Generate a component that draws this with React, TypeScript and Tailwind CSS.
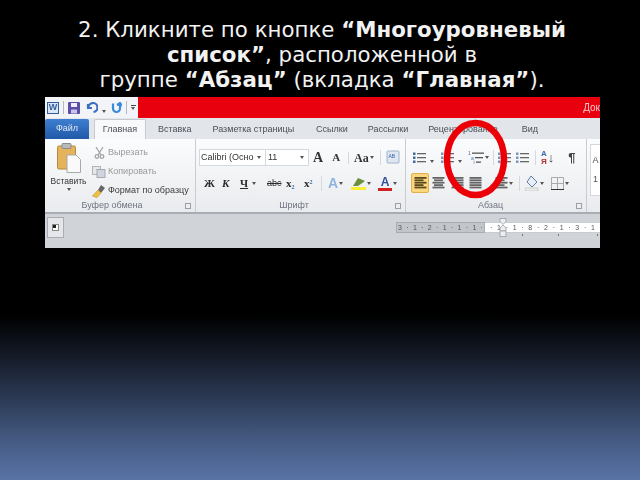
function Caret() {
  return <span className="mx-px inline-block h-0 w-0 border-x-[2px] border-t-[3px] border-x-transparent border-t-[#555]" />;
}

function Lines({ kind, color = "#666" }: { kind: "left" | "center" | "right" | "full"; color?: string }) {
  const rows = [0, 1, 2, 3, 4];
  return (
    <svg width="13" height="12" viewBox="0 0 13 12">
      {rows.map((r) => {
        const short = r % 2 === 1;
        const w = kind === "full" || !short ? 12 : 9;
        const x = kind === "left" || kind === "full" ? 0.5 : kind === "center" ? (13 - w) / 2 : 12.5 - w;
        return <rect key={r} x={x} y={r * 2.4} width={w} height="1.8" fill={color} />;
      })}
    </svg>
  );
}

function ListIcon({ kind }: { kind: "bullet" | "number" | "multi" }) {
  if (kind === "multi") {
    return (
      <svg width="16" height="14" viewBox="0 0 16 14" fontFamily="Liberation Sans, sans-serif" fontSize="5" fill="#3b6fb0">
        <text x="0" y="4">1</text>
        <rect x="4" y="1.500" width="12" height="1.300" fill="#555" />
        <text x="3" y="8.500">a</text>
        <rect x="7" y="6" width="8" height="1.300" fill="#555" />
        <text x="5.500" y="13">i</text>
        <rect x="8" y="10.500" width="5" height="1.300" fill="#555" />
      </svg>
    );
  }
  return (
    <svg width="13" height="12" viewBox="0 0 13 12">
      {[1, 5, 9].map((y) => (
        <g key={y}>
          <rect x="0" y={y - 0.5} width="2.5" height="2.5" fill={kind === "bullet" ? "#41699c" : "#7d95b8"} />
          <rect x="4" y={y} width="9" height="1.3" fill="#666" />
        </g>
      ))}
    </svg>
  );
}

function PasteIcon() {
  return (
    <svg width="24" height="30" viewBox="0 0 24 30">
      <rect x="0.5" y="3" width="18" height="23" rx="1.5" fill="#e3b45a" stroke="#b48a3c" />
      <rect x="5" y="0.5" width="9" height="5" rx="1" fill="#b9b9b9" stroke="#8a8a8a" />
      <path d="M10 12h9l4.500 4.500V29.500H10z" fill="#fafafa" stroke="#a9a9a9" />
    </svg>
  );
}

function SmallAction({ label, color, icon }: { label: string; color: string; icon: React.ReactNode }) {
  return (
    <div className={`flex h-[19px] items-center gap-[2px] text-[9px] ${color}`}>
      <span className="flex w-[14px] justify-center">{icon}</span>
      <span className="whitespace-nowrap">{label}</span>
    </div>
  );
}

function GroupFooter({ label }: { label: string }) {
  return (
    <div className="relative mt-auto flex h-[15px] items-center justify-center pr-[16px] pt-[3px] text-[9px] text-[#6f7480]">
      {label}
      <span className="absolute right-[4px] top-[6px] h-[6px] w-[6px] border border-[#9aa0a8] bg-[#eee]" />
    </div>
  );
}

function ClipboardGroup() {
  return (
    <div className="flex w-[151px] flex-col border-r border-[#c9ccd1] pt-[4px]">
      <div className="flex h-[54px]">
        <div className="flex w-[47px] flex-col items-center text-[8.500px] leading-[10px] text-[#333]">
          <PasteIcon />
          <span className="mt-[3px]">Вставить</span>
          <span className="mt-0 flex h-[6px] items-center"><Caret /></span>
        </div>
        <div>
          <SmallAction
            label="Вырезать"
            color="text-[#9a9a9a]"
            icon={
              <svg width="11" height="13" viewBox="0 0 11 13" fill="none" stroke="#a5a5a5" strokeWidth="1.300">
                <path d="M2 1l5 8M9 1L4 9" />
                <circle cx="3" cy="10.500" r="1.800" />
                <circle cx="8" cy="10.500" r="1.800" />
              </svg>
            }
          />
          <SmallAction
            label="Копировать"
            color="text-[#9a9a9a]"
            icon={
              <svg width="14" height="12" viewBox="0 0 14 12">
                <rect x="0.500" y="0.500" width="8" height="8" fill="#e5e7ea" stroke="#b3b3b3" />
                <rect x="5" y="3.500" width="8" height="8" fill="#cfd6df" stroke="#a4a9b0" />
              </svg>
            }
          />
          <SmallAction
            label="Формат по образцу"
            color="text-[#3c3c3c]"
            icon={
              <svg width="14" height="14" viewBox="0 0 14 14">
                <path d="M9 1l4 3-4 5-3-3z" fill="#666" />
                <path d="M6 6l3 3-4 4.500L0.500 12z" fill="#f0c040" stroke="#b8902c" strokeWidth="0.600" />
              </svg>
            }
          />
        </div>
      </div>
      <GroupFooter label="Буфер обмена" />
    </div>
  );
}

function FontGroup() {
  return (
    <div className="flex w-[210px] flex-col border-r border-[#c9ccd1] pl-[3px] pt-[10px]">
      <div className="flex h-[17px] items-center text-[#333]">
        <div className="flex h-[17px] w-[67px] items-center justify-between border border-[#d5d8dc] bg-white pl-[1px] pr-[3px] text-[9px]">
          <span className="whitespace-nowrap">Calibri (Осно</span>
          <Caret />
        </div>
        <div className="flex h-[17px] w-[43px] items-center justify-between border border-l-0 border-[#d5d8dc] bg-white pl-[2px] pr-[3px] text-[9px]">
          11
          <Caret />
        </div>
        <span className="ml-[4px] font-['Liberation_Serif',serif] text-[14px] font-bold leading-none">A</span>
        <span className="ml-[9px] font-['Liberation_Serif',serif] text-[11px] font-bold leading-none">A</span>
        <span className="ml-[8px] flex items-center whitespace-nowrap border-l border-[#d5d8dc] pl-[5px] font-['Liberation_Serif',serif] text-[12px] font-bold leading-none">
          Aa<Caret />
        </span>
        <span className="ml-[5px] h-[15px] border-l border-[#d5d8dc]" />
        <svg className="ml-[5px]" width="14" height="15" viewBox="0 0 14 15">
          <rect x="1" y="1" width="12" height="12" rx="1" fill="#dfe7f2" stroke="#9db2ce" />
          <text x="2.500" y="8" fontSize="5" fill="#2f5f9e" fontFamily="Liberation Sans, sans-serif">AB</text>
        </svg>
      </div>
      <div className="mt-[9px] flex h-[17px] items-center font-['Liberation_Serif',serif] text-[11px] font-bold text-[#2b2b2b]">
        <span className="ml-[5px] w-[16px]">Ж</span>
        <span className="ml-[2px] w-[18px] italic">К</span>
        <span className="w-[11px] underline">Ч</span>
        <Caret />
        <span className="ml-[10px] w-[19px] font-['Liberation_Sans',sans-serif] text-[9px] font-normal line-through">abc</span>
        <span className="w-[18px]">x<sub className="text-[6px] text-[#3b6fb0]">2</sub></span>
        <span className="w-[17px]">x<sup className="text-[6px] text-[#3b6fb0]">2</sup></span>
        <span className="h-[15px] border-l border-[#d5d8dc]" />
        <span className="ml-[6px] font-['Liberation_Sans',sans-serif] text-[14px] text-[#8fb4e0]">A</span>
        <Caret />
        <span className="ml-[7px] flex w-[15px] flex-col items-center">
          <svg width="14" height="10" viewBox="0 0 14 10"><path d="M1 9l5-8 7 3-7 5z" fill="#6d8f3c" /></svg>
          <span className="h-[3px] w-[15px] bg-[#f7f030]" />
        </span>
        <Caret />
        <span className="ml-[6px] flex w-[14px] flex-col items-center font-['Liberation_Sans',sans-serif] text-[12px] leading-[11px] text-[#2f4f9e]">
          A
          <span className="h-[3px] w-[14px] bg-[#d02020]" />
        </span>
        <Caret />
      </div>
      <GroupFooter label="Шрифт" />
    </div>
  );
}

function ParagraphGroup() {
  return (
    <div className="flex w-[181px] flex-col border-r border-[#c9ccd1] pl-[5px] pt-[10px]">
      <div className="ml-[2px] flex h-[17px] items-center">
        <ListIcon kind="bullet" />
        <span className="ml-[3px]"><Caret /></span>
        <span className="ml-[6px]"><ListIcon kind="number" /></span>
        <span className="ml-[3px]"><Caret /></span>
        <span className="ml-[5px]"><ListIcon kind="multi" /></span>
        <Caret />
        <span className="ml-[3px] h-[15px] border-l border-[#d5d8dc]" />
        <span className="ml-[4px]"><ListIcon kind="number" /></span>
        <span className="ml-[5px]"><ListIcon kind="number" /></span>
        <span className="ml-[6px] h-[15px] border-l border-[#d5d8dc]" />
        <span className="ml-[5px] flex items-center text-[8px] font-bold leading-[8px] text-[#3b6fb0]">
          <span className="flex flex-col"><span>А</span><span className="text-[#b03030]">Я</span></span>
          <span className="ml-[1px] text-[13px] leading-none text-[#444]">↓</span>
        </span>
        <span className="ml-[14px] text-[13px] font-bold leading-none text-[#444]">¶</span>
      </div>
      <div className="mt-[7px] flex h-[20px] items-center">
        <span className="flex h-[20px] w-[18px] items-center justify-center rounded-[2px] border border-[#e2b04a] bg-[#fbd67c]">
          <Lines kind="left" color="#5a4a20" />
        </span>
        <span className="ml-[3px]"><Lines kind="center" /></span>
        <span className="ml-[6px]"><Lines kind="right" /></span>
        <span className="ml-[5px]"><Lines kind="full" /></span>
        <span className="ml-[13px]"><Lines kind="left" /></span>
        <Caret />
        <span className="ml-[5px] h-[15px] border-l border-[#d5d8dc]" />
        <svg className="ml-[5px]" width="14" height="16" viewBox="0 0 14 16">
          <path d="M6 1l6 6-5 5-5-5z" fill="#e8eef5" stroke="#5c7ea8" />
          <rect x="0" y="13" width="13" height="3" fill="#ececec" stroke="#aaa" strokeWidth="0.500" />
        </svg>
        <Caret />
        <svg className="ml-[6px]" width="13" height="13" viewBox="0 0 13 13" fill="none" stroke="#aaa">
          <path d="M0.500 0.500h12v12h-12zM6.500 0.500v12M0.500 6.500h12" />
          <path d="M0 12.500h13" stroke="#333" />
        </svg>
        <Caret />
      </div>
      <GroupFooter label="Абзац" />
    </div>
  );
}

function StylesGroup() {
  return (
    <div className="flex-1 pl-[3px] pt-[5px]">
      <div className="flex h-[52px] flex-col items-center justify-center gap-[6px] border border-r-0 border-[#d5d8dc] bg-white text-[9px] text-[#555]">
        <span>А</span>
        <span>1</span>
      </div>
    </div>
  );
}

function Tab({ label, className }: { label: string; className: string }) {
  return <span className={`whitespace-nowrap text-[9px] text-[#4a4f58] ${className}`}>{label}</span>;
}

function Ruler() {
  const grey = ["3", "·", "1", "·", "2", "·", "1", "·", "1", "·", "1", "·"];
  const white = ["·", "1", "·", "1", "·", "8", "·", "2", "·", "1", "·", "3", "·", "1"];
  return (
    <div className="relative ml-auto mt-[8px] flex h-[11px] w-[204px] text-[7px] leading-[10px] text-[#555]">
      <div className="flex w-[89px] justify-between border border-[#a9adb3] bg-[#c2c5ca] px-[1px]">
        {grey.map((c, i) => <span key={i}>{c}</span>)}
      </div>
      <div className="flex flex-1 justify-between border-y border-[#c9ccd1] bg-white px-[5px]">
        {white.map((c, i) => <span key={i}>{c}</span>)}
      </div>
      {/* indent marker */}
      <svg className="absolute left-[103px] top-[-4px]" width="8" height="19" viewBox="0 0 8 19">
        <path d="M1 0.500h6v3l-3 3-3-3zM4 7l3 3v3H1v-3z" fill="#eceef0" stroke="#8f949b" strokeWidth="0.700" />
        <rect x="1" y="13" width="6" height="5.500" fill="#eceef0" stroke="#8f949b" strokeWidth="0.700" />
      </svg>
      {/* tab stops under the ruler */}
      <span className="absolute left-[126px] top-[12px] h-[2px] w-px bg-[#777]" />
      <span className="absolute left-[162px] top-[12px] h-[2px] w-px bg-[#777]" />
      <span className="absolute left-[201px] top-[12px] h-[2px] w-px bg-[#777]" />
    </div>
  );
}

function WordShot() {
  return (
    <div className="relative ml-[45px] mt-[5px] w-[555px] overflow-hidden blur-[0.6px] font-['Liberation_Sans',sans-serif]">
      <div className="flex h-[21px] items-center bg-[#f2f4f7]">
        <span className="ml-[2px] flex h-[12px] w-[12px] items-center justify-center border border-[#2f5f9e] bg-[#dbe7f5] text-[9px] font-bold leading-none text-[#2f5f9e]">W</span>
        <span className="ml-[4px] h-[13px] border-l border-[#b5b9bf]" />
        <svg className="ml-[4px]" width="12" height="12" viewBox="0 0 12 12">
          <rect width="12" height="12" rx="1" fill="#5d4fa8" />
          <rect x="3" y="1" width="6" height="4" fill="#eef" />
          <rect x="3" y="7.500" width="6" height="4" fill="#c9c4e8" />
        </svg>
        <svg className="ml-[6px]" width="12" height="12" viewBox="0 0 12 12" fill="none" stroke="#3b6fc0" strokeWidth="2.200">
          <path d="M2 2v4h4M2.500 6a4.500 4.500 0 1 1 5 4" />
        </svg>
        <span className="ml-[3px]"><Caret /></span>
        <svg className="ml-[4px]" width="11" height="12" viewBox="0 0 11 12" fill="none" stroke="#3b8ad8" strokeWidth="2.200">
          <path d="M2 1.500v5a3.500 3.500 0 0 0 7 0v-4M6 3l3-2 2 3" />
        </svg>
        <span className="ml-[4px] h-[13px] border-l border-[#b5b9bf]" />
        <span className="ml-[3px] flex flex-col items-center gap-[1px]">
          <span className="h-px w-[5px] bg-[#444]" />
          <Caret />
        </span>
        <div className="ml-[2px] flex h-full flex-1 items-center justify-end bg-[#e8000f] text-[10px] text-[#f7c9c9]">Док</div>
      </div>
      <div className="flex h-[21px] items-end bg-[#e2e5e9]">
        <span className="flex h-[20px] w-[44px] items-center justify-center rounded-t-[2px] bg-gradient-to-b from-[#3f7fd0] to-[#2059a8] text-[9px] text-[#dfe8f5]">Файл</span>
        <span className="ml-[5px] flex h-[20px] w-[52px] items-center justify-center rounded-t-[2px] border border-b-0 border-[#c6c9ce] bg-[#f8f9fa] text-[9px] text-[#4a4f58]">Главная</span>
        <div className="flex h-[20px] items-center pt-[1px]">
          <Tab label="Вставка" className="ml-[12px]" />
          <Tab label="Разметка страницы" className="ml-[21px]" />
          <Tab label="Ссылки" className="ml-[22px]" />
          <Tab label="Рассылки" className="ml-[20px]" />
          <Tab label="Рецензирование" className="ml-[20px]" />
          <Tab label="Вид" className="ml-[24px]" />
        </div>
      </div>
      <div className="flex h-[75px] border-b-2 border-[#a9adb3] bg-gradient-to-b from-[#fbfcfd] to-[#e9ebee]">
        <ClipboardGroup />
        <FontGroup />
        <ParagraphGroup />
        <StylesGroup />
      </div>
      <div className="flex h-[34px] items-start bg-[#d0d3d8]">
        <span className="ml-[2px] mt-[3px] flex h-[21px] w-[17px] items-center justify-center border border-[#a9adb3] bg-[#e4e6e9]">
          <span className="h-[7px] w-[7px] border border-[#888] bg-white">
            <span className="block h-[3px] w-[3px] bg-[#222]" />
          </span>
        </span>
        <Ruler />
      </div>
      <svg className="absolute left-[398px] top-[22px]" width="65" height="80" viewBox="0 0 65 80" fill="none">
        <ellipse cx="32.500" cy="40" rx="28.500" ry="36" stroke="#ec0008" strokeWidth="6.500" />
      </svg>
    </div>
  );
}

export default function App() {
  return (
    <div className="h-[480px] w-[640px] overflow-hidden bg-[linear-gradient(to_bottom,#000_0,#000_315px,#141a26_355px,#2c3b56_400px,#455a82_440px,#5873a6_480px)] pt-[17px]">
      <p className="pl-[4px] text-center font-['DejaVu_Sans',sans-serif] text-[21.330px] leading-[25px] text-[#f2f2f2]">
        2. Кликните по кнопке <b>“Многоуровневый
        <br />
        список”</b>, расположенной в
        <br />
        группе <b>“Абзац”</b> (вкладка <b>“Главная”</b>).
      </p>
      <WordShot />
    </div>
  );
}
